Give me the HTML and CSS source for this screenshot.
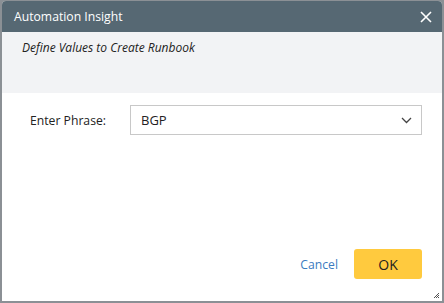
FILE: index.html
```html
<!DOCTYPE html>
<html lang="en">

<head>
    <meta charset="utf-8">
    <title>Automation Insight</title>
    <link rel="stylesheet" href="styles.css">
</head>

<body>
    <div class="dialog">
        <header class="dialog-header">
            <h1>Automation Insight</h1>
            <button class="close" aria-label="Close">
                <svg width="12" height="12" viewBox="0 0 12 12">
                    <path d="M1 1L11 11M11 1L1 11" stroke="#fff" stroke-width="1.6" fill="none"/>
                </svg>
            </button>
        </header>
        <div class="dialog-sub">
            <p>Define Values to Create Runbook</p>
        </div>
        <main class="dialog-body">
            <div class="field">
                <label>Enter Phrase:</label>
                <div class="select">
                    <span>BGP</span>
                    <svg width="11" height="7" viewBox="0 0 11 7">
                        <path d="M1 1L5.5 5.5L10 1" stroke="#444" stroke-width="1.3" fill="none"/>
                    </svg>
                </div>
            </div>
        </main>
        <footer class="dialog-footer">
            <button class="cancel">Cancel</button>
            <button class="ok">OK</button>
            <svg class="grip" width="7" height="7" viewBox="0 0 7 7">
                <path d="M6 1L1 6M6 3L3 6M6 5L5 6" stroke="#555" stroke-width="1" fill="none"/>
            </svg>
        </footer>
    </div>
</body>

</html>
```

FILE: styles.css
```css
body {
    margin: 0;
    background-color: #8b9095;
    font-family: 'Open Sans', sans-serif;
    font-size: 12.2px;
    color: #222;
}

.dialog {
    margin: 1px 2px 0 2px;
    height: 300px;
    background-color: white;
    border-radius: 4px 4px 0 0;
    display: flex;
    flex-direction: column;
    overflow: hidden;
}

.dialog-header {
    height: 31px;
    background-color: #566873;
    display: flex;
    align-items: center;
    justify-content: space-between;
    padding: 0 10px 0 12px;
}

h1 {
    margin: 0;
    font-size: 12.2px;
    font-weight: normal;
    color: white;
}

.close {
    background: none;
    border: none;
    padding: 0;
    display: flex;
    cursor: pointer;
}

.dialog-sub {
    height: 61px;
    background-color: #f2f3f5;
    padding: 0 20px;
}

.dialog-sub p {
    margin: 7px 0 0 0;
    font-style: italic;
    font-size: 12px;
}

.dialog-body {
    flex: 1;
    padding: 12px 20px 0 28px;
}

.field {
    display: flex;
    align-items: center;
}

.field label {
    width: 100px;
}

.select {
    flex: 1;
    height: 28px;
    border: 1px solid #c8c8c8;
    display: flex;
    align-items: center;
    justify-content: space-between;
    padding: 0 9px 0 10px;
    font-size: 13px;
}

.dialog-footer {
    position: relative;
    display: flex;
    justify-content: flex-end;
    align-items: center;
    gap: 16px;
    padding: 0 20px 22px 0;
}

.cancel {
    background: none;
    border: none;
    padding: 0;
    font-family: inherit;
    font-size: 12.2px;
    color: #3a7bbf;
    cursor: pointer;
}

.ok {
    width: 68px;
    height: 30px;
    border: none;
    border-radius: 3px;
    background-color: #ffca3e;
    font-family: inherit;
    font-size: 14px;
    color: #222;
    cursor: pointer;
}

.grip {
    position: absolute;
    right: 2px;
    bottom: 2px;
}
```
